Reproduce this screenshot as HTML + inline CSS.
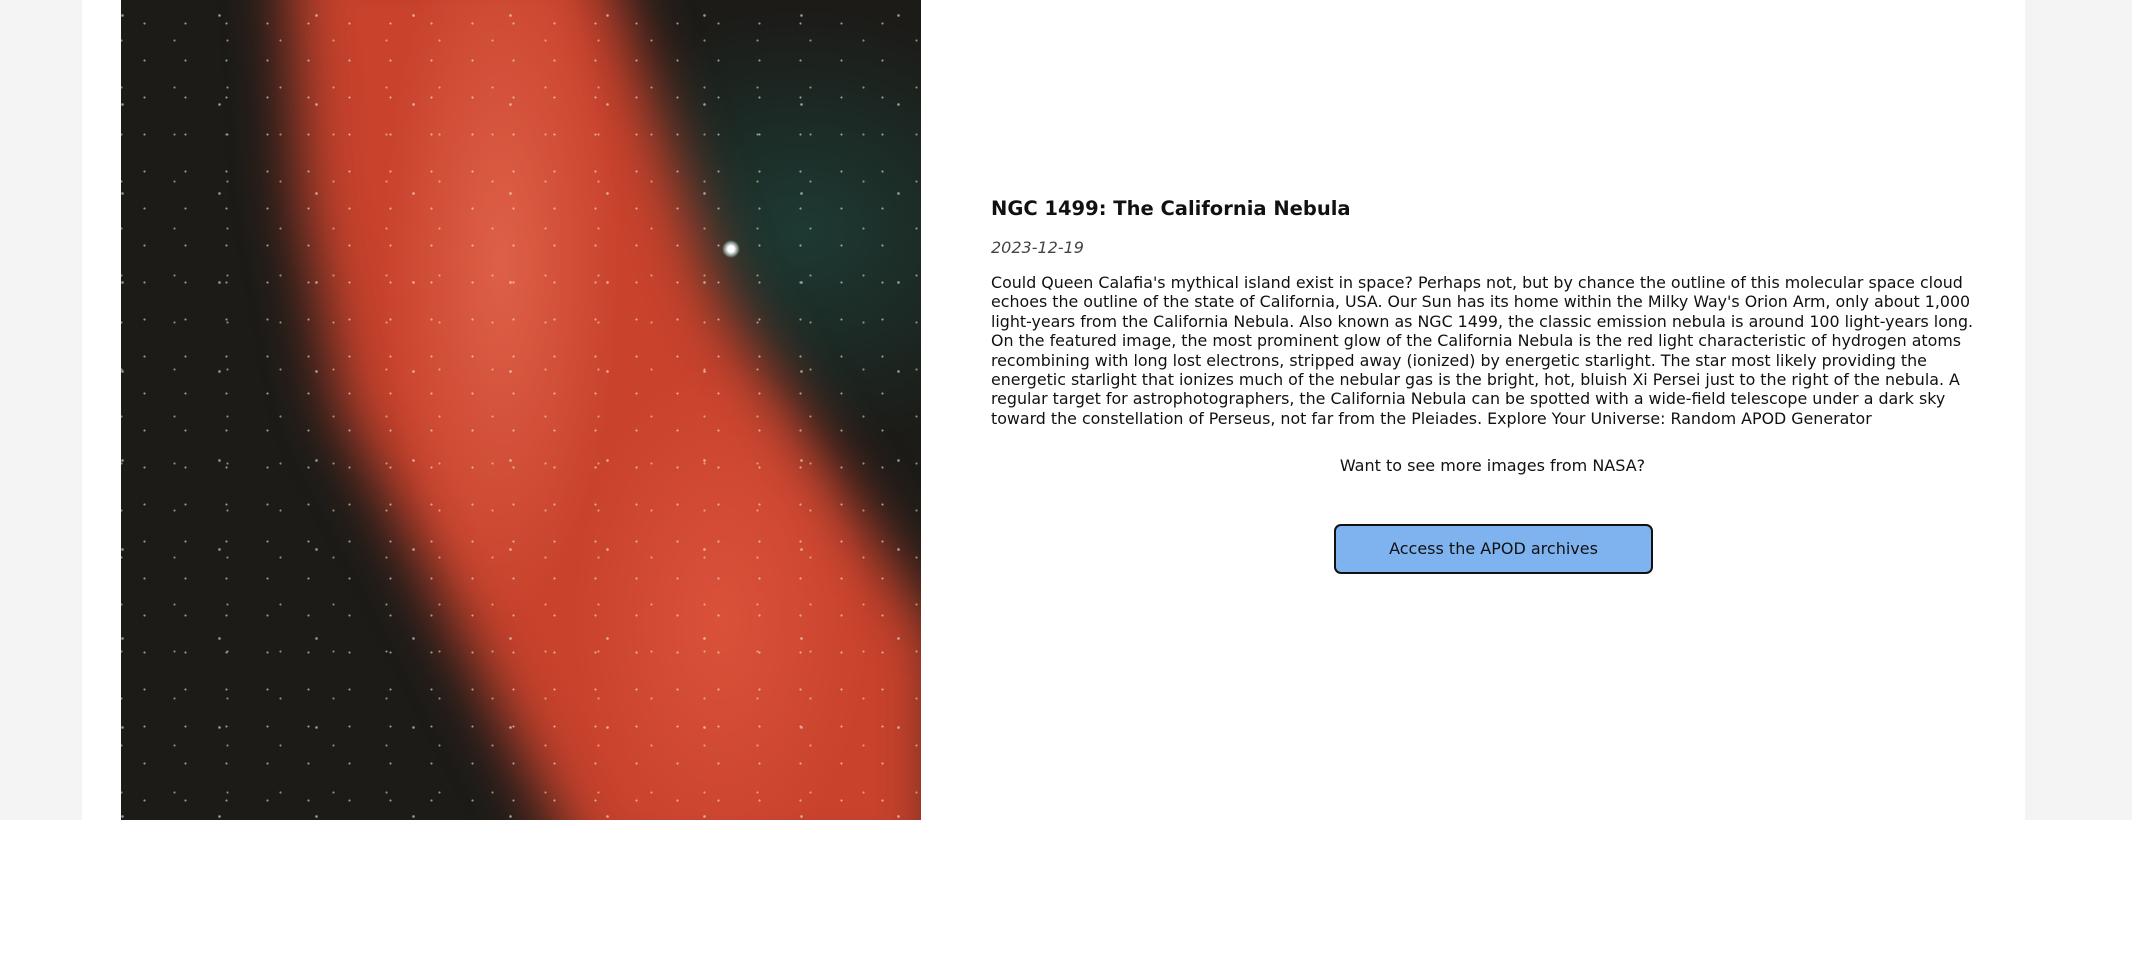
<!DOCTYPE html>
<html><head><style>
html,body{margin:0;padding:0;width:2132px;height:979px;background:#fff;overflow:hidden;font-family:"DejaVu Sans","Liberation Sans",sans-serif;}
.bg{position:absolute;left:0;top:0;width:2132px;height:820px;background:#f4f4f4;}
.wrap{position:absolute;left:82px;top:0;width:1943px;height:820px;background:#fff;}
.img{position:absolute;left:121px;top:0;width:800px;height:820px;overflow:hidden;background:#1c1b18;}
.img div{position:absolute;}
.t{position:absolute;left:991px;color:#111;white-space:nowrap;}
</style></head><body>
<div class="bg"></div><div class="wrap"></div>
<div class="img">
 <div style="left:0;top:0;width:800px;height:820px;background:radial-gradient(ellipse 260px 220px at 680px 230px,#1d3a33 0%,rgba(20,40,36,0) 100%);"></div>
 <div style="left:0;top:-60px;width:800px;height:940px;filter:blur(30px);">
  <div style="left:0;top:0;width:900px;height:940px;background:#c8422c;clip-path:polygon(165px 0,477px 0,600px 360px,820px 700px,820px 940px,464px 940px,300px 620px,219px 468px,180px 260px);"></div>
 </div>
 <div style="left:0;top:0;width:800px;height:820px;background:radial-gradient(ellipse 120px 360px at 380px 260px,rgba(240,120,95,.55),rgba(0,0,0,0)),radial-gradient(ellipse 150px 260px at 600px 620px,rgba(240,100,75,.45),rgba(0,0,0,0));"></div>
 <div style="left:0;top:0;width:800px;height:820px;opacity:.55;background-image:radial-gradient(circle,#fff 0.8px,transparent 1.3px),radial-gradient(circle,#ffe9b0 0.8px,transparent 1.3px),radial-gradient(circle,#fff 1px,transparent 1.6px);background-size:41px 37px,53px 47px,97px 89px;background-position:3px 5px,27px 17px,50px 60px;"></div>
 <div style="left:601px;top:240px;width:18px;height:18px;border-radius:50%;background:radial-gradient(circle,#fff 25%,rgba(200,255,240,.4) 55%,transparent 70%);"></div>
</div>
<div class="t" style="top:197px;font-size:19.5px;font-weight:bold;">NGC 1499: The California Nebula</div>
<div class="t" style="top:238px;font-size:16px;font-style:italic;color:#444;">2023-12-19</div>
<div class="t" style="top:273px;font-size:15.85px;line-height:19.4px;">Could Queen Calafia's mythical island exist in space? Perhaps not, but by chance the outline of this molecular space cloud<br>echoes the outline of the state of California, USA. Our Sun has its home within the Milky Way's Orion Arm, only about 1,000<br>light-years from the California Nebula. Also known as NGC 1499, the classic emission nebula is around 100 light-years long.<br>On the featured image, the most prominent glow of the California Nebula is the red light characteristic of hydrogen atoms<br>recombining with long lost electrons, stripped away (ionized) by energetic starlight. The star most likely providing the<br>energetic starlight that ionizes much of the nebular gas is the bright, hot, bluish Xi Persei just to the right of the nebula. A<br>regular target for astrophotographers, the California Nebula can be spotted with a wide-field telescope under a dark sky<br>toward the constellation of Perseus, not far from the Pleiades. Explore Your Universe: Random APOD Generator</div>
<div class="t" style="top:456px;left:991px;width:1003px;text-align:center;font-size:16px;">Want to see more images from NASA?</div>
<div style="position:absolute;left:1334px;top:524px;width:319px;height:50px;box-sizing:border-box;border:2px solid #111;border-radius:7px;background:#7fb3f0;font-size:16px;text-align:center;line-height:46px;color:#111;">Access the APOD archives</div>
</body></html>
